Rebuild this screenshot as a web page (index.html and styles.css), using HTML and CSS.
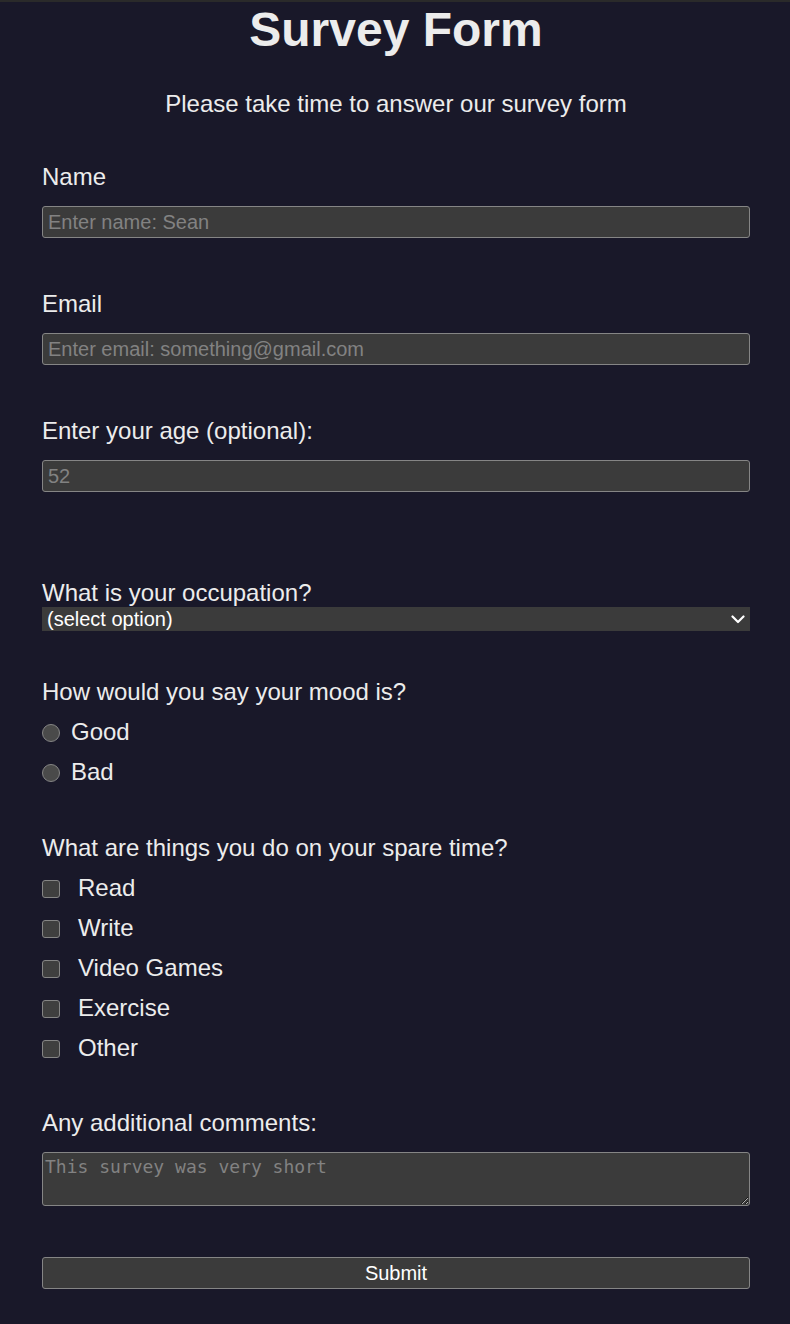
FILE: index.html
```html
<!DOCTYPE html>
<html lang="en">
<head>
<meta charset="utf-8">
<title>Survey Form</title>
<link rel="stylesheet" href="styles.css">
</head>
<body class="page">
  <main class="container">
    <h1 class="title" id="title">Survey Form</h1>
    <p class="description" id="description">Please take time to answer our survey form</p>
    <form class="survey" id="survey-form">
      <div class="group group-input">
        <label class="label" for="name" id="name-label">Name</label>
        <input class="field" type="text" id="name" placeholder="Enter name: Sean">
      </div>
      <div class="group group-input">
        <label class="label" for="email" id="email-label">Email</label>
        <input class="field" type="email" id="email" placeholder="Enter email: something@gmail.com">
      </div>
      <div class="group group-age">
        <label class="label" for="number" id="number-label">Enter your age (optional):</label>
        <input class="field" type="number" id="number" placeholder="52">
      </div>
      <div class="group group-plain">
        <label class="label label-tight" for="dropdown">What is your occupation?</label>
        <div class="select-wrap">
          <select class="select" id="dropdown">
            <option>(select option)</option>
            <option>Student</option>
            <option>Employed</option>
            <option>Other</option>
          </select>
          <svg class="chevron" width="14" height="9" viewBox="0 0 14 9" aria-hidden="true"><path d="M1.5 1.5 L7 7 L12.5 1.5" fill="none" stroke="#ffffff" stroke-width="2.2" stroke-linecap="round" stroke-linejoin="round"/></svg>
        </div>
      </div>
      <div class="group group-plain group-mood">
        <p class="label">How would you say your mood is?</p>
        <div class="options">
          <label class="option option-radio"><input class="radio" type="radio" name="mood" value="good"><span>Good</span></label>
          <label class="option option-radio"><input class="radio" type="radio" name="mood" value="bad"><span>Bad</span></label>
        </div>
      </div>
      <div class="group group-plain">
        <p class="label">What are things you do on your spare time?</p>
        <div class="options">
          <label class="option option-check"><input class="check" type="checkbox" value="read"><span>Read</span></label>
          <label class="option option-check"><input class="check" type="checkbox" value="write"><span>Write</span></label>
          <label class="option option-check"><input class="check" type="checkbox" value="games"><span>Video Games</span></label>
          <label class="option option-check"><input class="check" type="checkbox" value="exercise"><span>Exercise</span></label>
          <label class="option option-check"><input class="check" type="checkbox" value="other"><span>Other</span></label>
        </div>
      </div>
      <div class="group group-comments">
        <label class="label" for="comments">Any additional comments:</label>
        <textarea class="textarea" id="comments" placeholder="This survey was very short"></textarea>
      </div>
      <button class="submit" type="submit" id="submit">Submit</button>
    </form>
  </main>
</body>
</html>
```
FILE: styles.css
```css
:root {
  color-scheme: dark;
}

* {
  box-sizing: border-box;
}

.page {
  margin: 0;
  background: #191829;
  color: #ececec;
  font-family: "Liberation Sans", Arial, sans-serif;
  font-size: 24px;
  border-top: 2px solid #2a2a2a;
}

.container {
  padding: 0 40px 30px 42px;
}

.title {
  margin: 0;
  font-size: 48px;
  line-height: 55px;
  font-weight: bold;
  text-align: center;
}

.description {
  margin: 33px 0 0;
  text-align: center;
  font-size: 24px;
  line-height: 28px;
}

.survey {
  margin-top: 45px;
  display: flex;
  flex-direction: column;
}

.group-input {
  margin-bottom: 52px;
}

.group-age {
  margin-bottom: 87px;
}

.group-plain {
  margin-bottom: 47px;
}

.group-mood {
  margin-bottom: 48px;
}

.group-comments {
  margin-bottom: 51px;
}

.label {
  display: block;
  margin: 0;
  font-size: 24px;
  line-height: 28px;
}

.field {
  display: block;
  width: 100%;
  height: 32px;
  margin-top: 15px;
  padding: 0 5px;
  background: #3b3b3b;
  color: #ffffff;
  border: 1px solid #858585;
  border-radius: 3px;
  font-family: "Liberation Sans", Arial, sans-serif;
  font-size: 20px;
}

.field::placeholder,
.textarea::placeholder {
  color: #828282;
}

.field::-webkit-outer-spin-button,
.field::-webkit-inner-spin-button {
  -webkit-appearance: none;
  margin: 0;
}

.select-wrap {
  position: relative;
  margin-top: 0;
}

.select {
  appearance: none;
  -webkit-appearance: none;
  display: block;
  width: 100%;
  height: 24px;
  margin: 0;
  padding: 0 0 0 5px;
  background: #3b3b3b;
  color: #ffffff;
  border: none;
  border-radius: 0;
  font-family: "Liberation Sans", Arial, sans-serif;
  font-size: 20px;
}

.chevron {
  position: absolute;
  right: 5px;
  top: 8px;
  pointer-events: none;
}

.options {
  margin-top: 12px;
  display: flex;
  flex-direction: column;
  gap: 12px;
}

.option {
  display: flex;
  align-items: center;
  height: 28px;
  font-size: 24px;
  line-height: 28px;
}

.option-radio {
  gap: 11px;
}

.option-check {
  gap: 18px;
}

.radio,
.check {
  appearance: none;
  -webkit-appearance: none;
  margin: 2px 0 0;
  width: 18px;
  height: 18px;
  flex: none;
  border: 1px solid #858585;
}

.radio {
  border-radius: 50%;
  background: #4a4a4a;
}

.check {
  border-radius: 3px;
  background: #3f3f3f;
}

.textarea {
  display: block;
  width: 100%;
  height: 54px;
  margin-top: 15px;
  padding: 3px 2px;
  background: #3b3b3b;
  color: #ffffff;
  border: 1px solid #858585;
  border-radius: 3px;
  font-family: "DejaVu Sans Mono", monospace;
  font-size: 18px;
  resize: both;
}

.submit {
  display: block;
  width: 100%;
  height: 32px;
  margin: 0;
  padding: 0;
  background: #3b3b3b;
  color: #ffffff;
  border: 1px solid #858585;
  border-radius: 3px;
  font-family: "Liberation Sans", Arial, sans-serif;
  font-size: 20px;
}
```
